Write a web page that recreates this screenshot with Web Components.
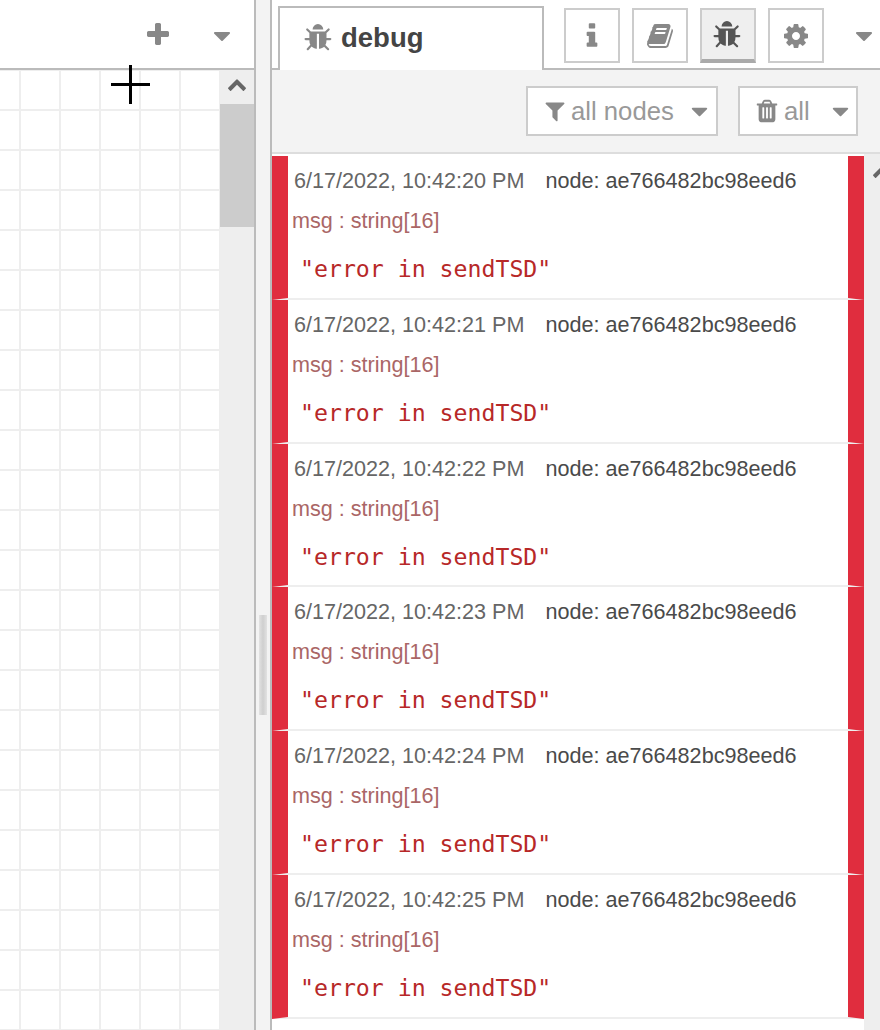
<!DOCTYPE html>
<html>
<head>
<meta charset="utf-8">
<title>debug</title>
<style>
  html, body { margin: 0; height: 1030px; overflow: hidden; background: #fff; font-family: "Liberation Sans", Arial, sans-serif; }
</style>
</head>
<body>
<nr-editor>
  <nr-workspace slot="left"></nr-workspace>
  <nr-sidebar slot="right">
    <debug-msg time="6/17/2022, 10:42:20 PM"></debug-msg>
    <debug-msg time="6/17/2022, 10:42:21 PM"></debug-msg>
    <debug-msg time="6/17/2022, 10:42:22 PM"></debug-msg>
    <debug-msg time="6/17/2022, 10:42:23 PM"></debug-msg>
    <debug-msg time="6/17/2022, 10:42:24 PM"></debug-msg>
    <debug-msg time="6/17/2022, 10:42:25 PM"></debug-msg>
  </nr-sidebar>
</nr-editor>

<script>
const ICONS = {
  bug: 'M1632 960q0 26-19 45t-45 19h-224q0 171-67 290l208 209q19 19 19 45t-19 45q-18 19-45 19t-45-19l-198-197q-5 5-15 13t-42 28.5-65 36.5-82 29-97 13v-896h-128v896q-51 0-101.5-13.5t-87-33-66-39-43.5-32.5l-15-14-183 207q-20 21-48 21-24 0-43-16-19-18-20.5-44.5t15.5-46.5l202-227q-58-114-58-274h-224q-26 0-45-19t-19-45 19-45 45-19h224v-294l-173-173q-19-19-19-45t19-45 45-19 45 19l173 173h844l173-173q19-19 45-19t45 19 19 45-19 45l-173 173v294h224q26 0 45 19t19 45zm-480-576h-640q0-133 93.5-226.5t226.5-93.5 226.5 93.5 93.5 226.5z',
  cog: 'M1152 896q0-106-75-181t-181-75-181 75-75 181 75 181 181 75 181-75 75-181zm512-109v222q0 12-8 23t-20 13l-185 28q-19 54-39 91 35 50 107 138 10 12 10 25t-9 23q-27 37-99 108t-94 71q-12 0-26-9l-138-108q-44 23-91 38-16 136-29 186-7 28-36 28h-222q-14 0-24.5-8.5t-11.5-21.5l-28-184q-49-16-90-37l-141 107q-10 9-25 9-14 0-25-11-126-114-165-168-7-10-7-23 0-12 8-23 15-21 51-66.5t54-70.5q-27-50-41-99l-183-27q-13-2-21-12.5t-8-23.5v-222q0-12 8-23t19-13l186-28q14-46 39-92-40-57-107-138-10-12-10-24 0-10 9-23 26-36 98.5-107.5t94.5-71.5q13 0 26 10l138 107q44-23 91-38 16-136 29-186 7-28 36-28h222q14 0 24.5 8.5t11.5 21.5l28 184q49 16 90 37l142-107q9-9 24-9 13 0 25 10 129 119 165 170 7 8 7 22 0 12-8 23-15 21-51 66.5t-54 70.5q26 50 41 98l183 28q13 2 21 12.5t8 23.5z',
  filter: 'M1595 295q17 41-14 70l-493 493v742q0 42-39 59-13 5-25 5-27 0-45-19l-256-256q-19-19-19-45v-486l-493-493q-31-29-14-70 17-39 59-39h1280q42 0 59 39z',
  trash: 'M704 1376v-704q0-14-9-23t-23-9h-64q-14 0-23 9t-9 23v704q0 14 9 23t23 9h64q14 0 23-9t9-23zm256 0v-704q0-14-9-23t-23-9h-64q-14 0-23 9t-9 23v704q0 14 9 23t23 9h64q14 0 23-9t9-23zm256 0v-704q0-14-9-23t-23-9h-64q-14 0-23 9t-9 23v704q0 14 9 23t23 9h64q14 0 23-9t9-23zm-544-992h448l-48-117q-7-9-17-11h-317q-10 2-17 11zm928 32v64q0 14-9 23t-23 9h-96v948q0 83-47 143.5t-113 60.5h-832q-66 0-113-58.5t-47-141.5v-952h-96q-14 0-23-9t-9-23v-64q0-14 9-23t23-9h309l70-167q15-37 54-63t79-26h320q40 0 79 26t54 63l70 167h309q14 0 23 9t9 23z',
  plus: 'M1600 736v192q0 40-28 68t-68 28h-416v416q0 40-28 68t-68 28h-192q-40 0-68-28t-28-68v-416h-416q-40 0-68-28t-28-68v-192q0-40 28-68t68-28h416v-416q0-40 28-68t68-28h192q40 0 68 28t28 68v416h416q40 0 68 28t28 68z',
  caret: 'M1408 704q0 26-19 45l-448 448q-19 19-45 19t-45-19l-448-448q-19-19-19-45t19-45 45-19h896q26 0 45 19t19 45z',
  info: 'M1216 1344v128q0 26-19 45t-45 19h-512q-26 0-45-19t-19-45v-128q0-26 19-45t45-19h64v-384h-64q-26 0-45-19t-19-45v-128q0-26 19-45t45-19h384q26 0 45 19t19 45v576h64q26 0 45 19t19 45zm-128-1152v192q0 26-19 45t-45 19h-256q-26 0-45-19t-19-45v-192q0-26 19-45t45-19h256q26 0 45 19t19 45z',
  book: 'M1703 478q40 57 18 129l-275 906q-19 64-76.5 107.5t-122.5 43.5h-923q-77 0-148.5-53.5t-99.5-131.5q-24-67-2-127 0-4 3-27t4-37q1-8-3-21.5t-3-19.5q2-11 8-21t16.5-23.5 16.5-23.5q23-38 45-91.5t30-91.5q3-10 .5-30t-.5-28q3-11 17-28t17-23q21-36 42-92t25-90q1-9-2.5-32t.5-28q4-13 22-30.5t22-22.5q19-26 42.5-84.5t27.5-96.5q1-8-3-25.5t-2-26.5q2-8 9-18t18-23 17-21q8-12 16.5-30.5t15-35 16-36 19.5-32 26.5-23.5 36-11.5 47.5 5.5l-1 3q38-9 51-9h761q74 0 114 56t18 130l-274 906q-36 119-71.5 153.5t-128.5 34.5h-869q-27 0-38 15-11 16-1 43 24 70 144 70h923q29 0 56-15.5t35-41.5l300-987q7-22 5-57 38 15 59 43zm-1064 2q-4 13 2 22.5t20 9.5h608q13 0 25.5-9.5t16.5-22.5l21-64q4-13-2-22.5t-20-9.5h-608q-13 0-25.5 9.5t-16.5 22.5zm-83 256q-4 13 2 22.5t20 9.5h608q13 0 25.5-9.5t16.5-22.5l21-64q4-13-2-22.5t-20-9.5h-608q-13 0-25.5 9.5t-16.5 22.5z',
  up: 'M1683 1331l-166 165q-19 19-45 19t-45-19l-531-531-531 531q-19 19-45 19t-45-19l-166-165q-19-19-19-45.5t19-45.5l742-741q19-19 45-19t45 19l742 741q19 19 19 45.5t-19 45.5z'
}

class FaIcon extends HTMLElement {
  connectedCallback() {
    const size = this.getAttribute('size') || 24
    this.attachShadow({ mode: 'open' })
    this.shadowRoot.innerHTML = `
      <style>
        :host { display: inline-flex; flex: none; width: ${size}px; height: ${size}px; }
        svg { width: 100%; height: 100%; display: block; fill: currentColor; }
      </style>
      <svg viewBox="0 0 1792 1792"><path d="${ICONS[this.getAttribute('name')]}"/></svg>
    `
  }
}
customElements.define('fa-icon', FaIcon)

class NrEditor extends HTMLElement {
  constructor() {
    super()
    this.attachShadow({ mode: 'open' })
    this.shadowRoot.innerHTML = `
      <style>
        :host { display: flex; width: 880px; height: 1030px; overflow: hidden; }
        .split {
          flex: none; width: 18px; background: #f3f3f3;
          border-left: 2px solid #bbb; border-right: 2px solid #bbb;
          display: flex; flex-direction: column; align-items: center; padding-top: 615px; box-sizing: border-box;
        }
        .grip { width: 8px; height: 100px; background: linear-gradient(to right, #e2e2e2, #cfcfcf, #e2e2e2); }
        ::slotted([slot=left]) { flex: none; }
        ::slotted([slot=right]) { flex: 1; min-width: 0; }
      </style>
      <slot name="left"></slot>
      <div class="split"><div class="grip"></div></div>
      <slot name="right"></slot>
    `
  }
}
customElements.define('nr-editor', NrEditor)

class NrWorkspace extends HTMLElement {
  constructor() {
    super()
    this.attachShadow({ mode: 'open' })
    this.shadowRoot.innerHTML = `
      <style>
        :host { display: flex; flex-direction: column; width: 254px; height: 1030px; position: relative; color: #888; }
        header {
          flex: none; height: 68px; border-bottom: 2px solid #bbb; background: #fff;
          display: flex; align-items: center; padding-left: 144px; gap: 36px;
        }
        .plus { margin-top: 2px; }
        .caret { margin-top: 4px; }
        main { flex: 1; display: flex; min-height: 0; }
        .grid {
          flex: 1;
          background-color: #fff;
          background-image:
            linear-gradient(to right, #eee 2px, transparent 2px),
            linear-gradient(to bottom, #eee 2px, transparent 2px);
          background-size: 40px 40px;
          background-position: 19px 39px;
        }
        .bar { flex: none; width: 34px; background: #eee; display: flex; flex-direction: column; }
        .arrow { height: 34px; display: flex; justify-content: center; padding-top: 4px; box-sizing: border-box; color: #666; }
        .thumb { height: 123px; background: #ccc; }
        .cross { position: absolute; left: 111px; top: 65px; width: 39px; height: 39px; }
        .cross::before { content: ""; position: absolute; left: 18px; top: 0; width: 3px; height: 39px; background: #000; }
        .cross::after { content: ""; position: absolute; left: 0; top: 18px; width: 39px; height: 3px; background: #000; }
      </style>
      <header>
        <fa-icon class="plus" name="plus" size="28"></fa-icon>
        <fa-icon class="caret" name="caret" size="28"></fa-icon>
      </header>
      <main>
        <div class="grid"></div>
        <div class="bar">
          <div class="arrow"><fa-icon name="up" size="20"></fa-icon></div>
          <div class="thumb"></div>
        </div>
      </main>
      <div class="cross"></div>
    `
  }
}
customElements.define('nr-workspace', NrWorkspace)

class NrSidebar extends HTMLElement {
  constructor() {
    super()
    this.attachShadow({ mode: 'open' })
    this.shadowRoot.innerHTML = `
      <style>
        :host { display: flex; flex-direction: column; height: 1030px; color: #888; }
        .tabs {
          flex: none; height: 62px; border-bottom: 2px solid #bbb; background: #fff;
          display: flex; align-items: flex-start; padding: 6px 0 0 6px;
        }
        .tab {
          width: 266px; height: 64px; box-sizing: border-box; background: #fff;
          border: 2px solid #bbb; border-bottom: none;
          display: flex; align-items: center; padding: 0 0 2px 24px; gap: 7px;
          font-size: 27.5px; font-weight: bold; color: #444;
        }
        .tab fa-icon { color: #888; }
        .btns { display: flex; gap: 12px; margin: 2px 0 0 20px; }
        .btn {
          width: 56px; height: 55px; box-sizing: border-box; border: 2px solid #ccc; background: #fff;
          display: flex; align-items: center; justify-content: center;
        }
        .btn.on { background: #efefef; border-bottom: 4px solid #aaa; color: #555; }
        .more { margin: 16px 0 0 26px; }
        .tools {
          flex: none; height: 84px; background: #f3f3f3; border-bottom: 2px solid #ddd;
          display: flex; justify-content: flex-end; align-items: flex-start; gap: 20px;
          padding: 16px 22px 0 0; box-sizing: border-box;
        }
        .tool {
          height: 50px; box-sizing: border-box; border: 2px solid #ccc; background: #fff;
          display: flex; align-items: center; font-size: 25.7px; color: #999;
        }
        .tool fa-icon { color: #888; }
        .nodes { width: 192px; padding-left: 15px; gap: 4px; }
        .all { width: 120px; padding-left: 14px; gap: 4px; }
        .nodes .caret { margin-left: 8px; }
        .all .caret { margin-left: 13px; }
        main { flex: 1; min-height: 0; display: flex; }
        .list { flex: 1; min-width: 0; padding-top: 2px; background: #fff; overflow: hidden; }
        .bar { flex: none; width: 16px; background: #eee; overflow: hidden; padding: 7px 0 0 8px; box-sizing: border-box; color: #666; }
      </style>
      <div class="tabs">
        <div class="tab"><fa-icon name="bug" size="30"></fa-icon>debug</div>
        <div class="btns">
          <div class="btn"><fa-icon name="info" size="30"></fa-icon></div>
          <div class="btn"><fa-icon name="book" size="28"></fa-icon></div>
          <div class="btn on"><fa-icon name="bug" size="30"></fa-icon></div>
          <div class="btn"><fa-icon name="cog" size="28"></fa-icon></div>
        </div>
        <fa-icon class="more" name="caret" size="28"></fa-icon>
      </div>
      <div class="tools">
        <div class="tool nodes"><fa-icon name="filter" size="24"></fa-icon>all nodes<fa-icon class="caret" name="caret" size="27"></fa-icon></div>
        <div class="tool all"><fa-icon name="trash" size="26"></fa-icon>all<fa-icon class="caret" name="caret" size="27"></fa-icon></div>
      </div>
      <main>
        <div class="list"><slot></slot></div>
        <div class="bar"><fa-icon name="up" size="20"></fa-icon></div>
      </main>
    `
  }
}
customElements.define('nr-sidebar', NrSidebar)

class DebugMsg extends HTMLElement {
  connectedCallback() {
    this.attachShadow({ mode: 'open' })
    this.shadowRoot.innerHTML = `
      <style>
        :host {
          display: block; box-sizing: border-box; height: 143.8px;
          border-left: 16px solid #e02d3e; border-right: 16px solid #e02d3e; border-bottom: 2px solid #eee;
          padding: 9px 0 0 4px; font-size: 21.6px; overflow: hidden; white-space: nowrap;
        }
        .meta { display: flex; height: 32px; line-height: 32px; padding-left: 2px; gap: 21px; color: #666; }
        .node { color: #4a4a4a; }
        .name { margin-top: 8px; height: 32px; line-height: 32px; color: #a66; }
        .val {
          margin: 16px 0 0 8px; height: 32px; line-height: 32px; color: #b72828;
          font-family: "DejaVu Sans Mono", "Liberation Mono", monospace; font-size: 23.2px;
        }
      </style>
      <div class="meta"><span>${this.getAttribute('time')}</span><span class="node">node: ae766482bc98eed6</span></div>
      <div class="name">msg : string[16]</div>
      <div class="val">"error in sendTSD"</div>
    `
  }
}
customElements.define('debug-msg', DebugMsg)
</script>
</body>
</html>
